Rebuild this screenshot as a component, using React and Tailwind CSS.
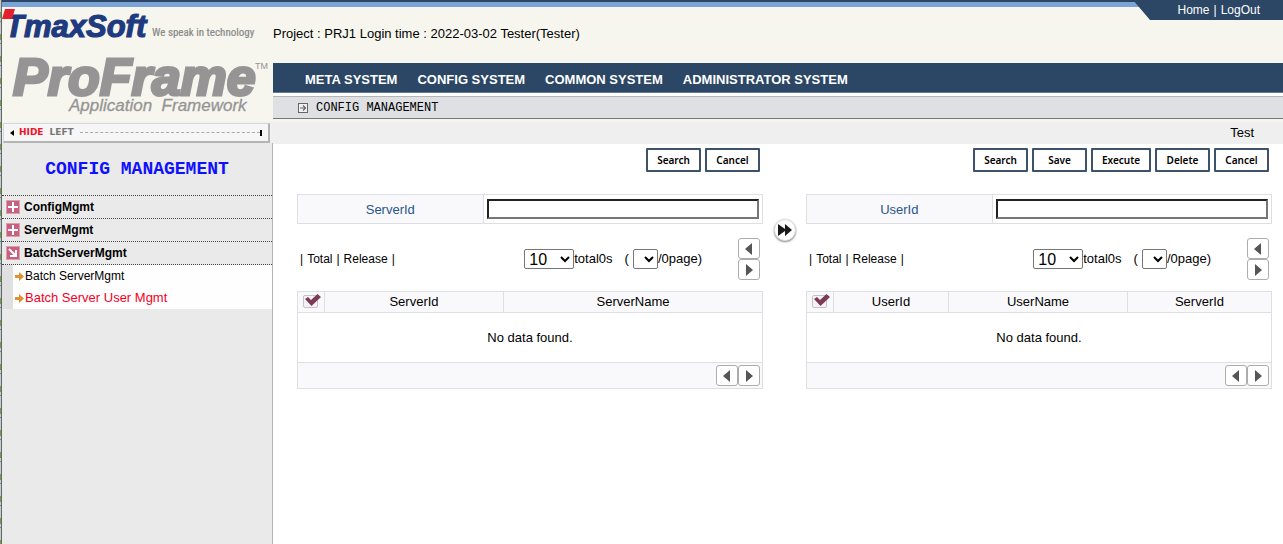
import React, { useState } from "react";

const NAV = ["META SYSTEM", "CONFIG SYSTEM", "COMMON SYSTEM", "ADMINISTRATOR SYSTEM"];

const MENU = [
  { label: "ConfigMgmt", open: false },
  { label: "ServerMgmt", open: false },
  { label: "BatchServerMgmt", open: true },
];

function Logo() {
  return (
    <svg
      width="270"
      height="115"
      viewBox="0 7 270 115"
      role="img"
      aria-label="TmaxSoft ProFrame"
      className="block"
    >
      <text x="3" y="37" fontSize="31" fontWeight="700" fontStyle="italic" fill="#203a80" stroke="#203a80" strokeWidth="1.2" fontFamily="'Liberation Sans', sans-serif">
        TmaxSoft
      </text>
      <path d="M3 9h10l-3 10h-10z" fill="#e5202e" />
      <text x="150" y="36" fontSize="11" fill="#8a8a8a" stroke="#8a8a8a" strokeWidth="0.2" fontFamily="'Liberation Sans Narrow', 'Roboto Condensed', sans-serif">
        We speak in technology
      </text>
      <text x="11" y="95" fontSize="52" fontWeight="700" fontStyle="italic" fill="#969495" stroke="#969495" strokeWidth="3" fontFamily="'Liberation Sans', sans-serif">
        ProFrame
      </text>
      <text x="253" y="69" fontSize="9" fill="#969495" fontFamily="'Liberation Sans', sans-serif">
        TM
      </text>
      <text x="67" y="111" fontSize="17" fontStyle="italic" fill="#969495" stroke="#969495" strokeWidth="0.3" fontFamily="'Liberation Sans', sans-serif">
        {"Application\u00a0 Framework"}
      </text>
    </svg>
  );
}

function MenuIcon({ open }) {
  return (
    <svg width="14" height="14" viewBox="0 0 14 14" className="shrink-0">
      <rect width="14" height="14" fill="#d9a0b0" />
      <rect x="1" y="1" width="12" height="12" fill="#c9607f" />
      {open ? (
        <path d="M3 3l7 7M10 4v6H4" stroke="#fff" strokeWidth="2" fill="none" />
      ) : (
        <path d="M7 2v10M2 7h10" stroke="#fff" strokeWidth="2" />
      )}
    </svg>
  );
}

function OrangeArrow() {
  return (
    <svg width="9" height="9" viewBox="0 0 9 9" className="shrink-0">
      <path d="M0 3h4V0l5 4.5L4 9V6H0z" fill="#e09032" />
    </svg>
  );
}

function ActionButton({ children, wide }) {
  return (
    <button
      className={`h-6 border-2 border-[#3c536b] rounded-[1px] bg-white font-['Noto_Sans'] text-[10px] font-semibold leading-none text-black ${
        wide ? "w-[60px]" : "w-[55px]"
      }`}
    >
      {children}
    </button>
  );
}

function ArrowButton({ dir }) {
  return (
    <button
      aria-label={dir === "left" ? "Previous" : "Next"}
      className="flex h-[21px] w-[22px] items-center justify-center rounded-[3px] border border-[#adadad] bg-white"
    >
      <svg width="8" height="12" viewBox="0 0 8 12">
        <path d={dir === "left" ? "M7 0v12L0 6z" : "M1 0v12L8 6z"} fill="#555" />
      </svg>
    </button>
  );
}

function CheckAll({ id }) {
  const [checked, setChecked] = useState(true);
  return (
    <label htmlFor={id} className="relative mx-auto block h-[14px] w-4">
      <input
        id={id}
        type="checkbox"
        aria-label="Select all"
        checked={checked}
        onChange={() => setChecked(!checked)}
        className="block h-[13px] w-[15px] appearance-none rounded-[2px] border border-[#c4c4c8] bg-[#f4f4f4]"
      />
      {checked && (
        <svg width="16" height="12" viewBox="0 0 16 12" className="pointer-events-none absolute -top-px left-0.5">
          <path d="M0 5l3-2 3 3L12.500 0 16 3 6.500 12z" fill="#7d3a58" />
        </svg>
      )}
    </label>
  );
}

function Panel({ id, field, actions, columns }) {
  return (
    <section className="min-w-0">
      <div className="flex h-[26px] justify-end gap-1 pr-[3px]">
        {actions.map((a) => (
          <ActionButton key={a} wide={a === "Execute"}>
            {a}
          </ActionButton>
        ))}
      </div>

      {/* Search field */}
      <div className="mt-5 flex h-[30px] border border-[#dedfe3]">
        <label
          htmlFor={`${id}-field`}
          className="flex w-2/5 items-center justify-center border-r border-[#dedfe3] bg-[#f9f9fb] pt-px text-[#27548d]"
        >
          {field}
        </label>
        <div className="flex flex-1 items-center px-[3px]">
          <input
            id={`${id}-field`}
            type="text"
            className="h-5 w-full border-2 border-t-[#222] border-l-[#222] border-r-[#767676] border-b-[#767676] bg-white px-1"
          />
        </div>
      </div>

      {/* Paging toolbar */}
      <div className="mt-[14px] flex h-[42px] items-center pl-[3px] pr-[3px]">
        <div className="flex flex-1 gap-1 text-xs">
          <span>|</span>
          <a href="#total">Total</a>
          <span>|</span>
          <a href="#release">Release</a>
          <span>|</span>
        </div>
        <div className="flex items-center">
          <select
            aria-label="Rows per page"
            className="h-5 w-[50px] rounded-[2px] border border-[#767676] bg-white text-base leading-none"
          >
            <option>10</option>
            <option>20</option>
          </select>
          <span>total0s</span>
          <span className="mr-1 ml-3">(</span>
          <select
            aria-label="Page"
            className="h-5 w-[25px] rounded-[2px] border border-[#767676] bg-white"
          />
          <span>/0page)</span>
        </div>
        <div className="ml-9">
          <ArrowButton dir="left" />
          <ArrowButton dir="right" />
        </div>
      </div>

      <table className="mt-[11px] w-full table-fixed border-collapse border border-[#dedfe3]">
        <thead>
          <tr className="h-[21px] bg-[#f9f9fb]">
            <th className="w-[27px] border border-[#dedfe3] p-0">
              <CheckAll id={`${id}-all`} />
            </th>
            {columns.map((c) => (
              <th key={c.label} className={`border border-[#dedfe3] p-0 pb-0.5 font-normal leading-none ${c.width}`}>
                {c.label}
              </th>
            ))}
          </tr>
        </thead>
        <tbody>
          <tr className="h-[50px]">
            <td colSpan={columns.length + 1} className="p-0 text-center">
              No data found.
            </td>
          </tr>
        </tbody>
        <tfoot>
          <tr className="h-[26px] border-t border-[#dedfe3] bg-[#f9f9fb]">
            <td colSpan={columns.length + 1} className="p-0">
              <div className="flex justify-end pr-[2px]">
                <ArrowButton dir="left" />
                <ArrowButton dir="right" />
              </div>
            </td>
          </tr>
        </tfoot>
      </table>
    </section>
  );
}

function Sidebar() {
  return (
    <aside className="flex w-[271px] shrink-0 flex-col">
      <div className="bg-[#f7f6ee]">
        <Logo />
      </div>
      <div className="bg-[#f0f0f0] pl-px pr-[3px] pt-px">
        <button className="flex h-5 w-full items-center border border-t-[#d8d8d8] border-l-[#d8d8d8] border-r-2 border-b-2 border-r-[#b4b4b4] border-b-[#b4b4b4] bg-[#f6f6f6] pr-[6px] pl-[6px] font-['DejaVu_Sans'] text-[9px] leading-none font-bold">
          <svg width="4" height="6" viewBox="0 0 4 6">
            <path d="M4 0v6L0 3z" fill="#000" />
          </svg>
          <span className="ml-[5px] text-[#f0142a]">HIDE</span>
          <span className="ml-[6px] text-[#777]">LEFT</span>
          <span className="ml-[6px] flex-1 border-t border-dashed border-[#aaa]" />
          <span className="h-[6px] w-[2px] bg-black" />
        </button>
      </div>
      <div className="flex-1 border-r border-[#b4b4b4] bg-[#eaeaea]">
        <h1 className="flex h-[52px] items-center justify-center font-['Liberation_Mono'] text-lg leading-none font-bold text-[#1010ff]">
          CONFIG MANAGEMENT
        </h1>
        <ul className="border-b border-dotted border-[#444]">
          {MENU.map((m) => (
            <li key={m.label} className="border-t border-dotted border-[#444]">
              <a href={`#${m.label}`} className="flex h-[22px] items-center gap-1 pl-1 text-xs font-bold">
                <MenuIcon open={m.open} />
                {m.label}
              </a>
            </li>
          ))}
        </ul>
        <ul className="border-l-[11px] border-[#e0e0e0] bg-[#fefefe]">
          <li>
            <a href="#batch-server" className="flex h-[22px] items-center gap-px pl-0.5 text-xs">
              <OrangeArrow />
              Batch ServerMgmt
            </a>
          </li>
          <li>
            <a href="#batch-server-user" className="flex h-[22px] items-center gap-px pl-0.5 text-[13px] text-[#f5001d]">
              <OrangeArrow />
              Batch Server User Mgmt
            </a>
          </li>
        </ul>
      </div>
    </aside>
  );
}

export default function App() {
  return (
    <div className="flex min-h-screen bg-white font-['Liberation_Sans',Arial,sans-serif] text-[13px] leading-4 text-black">
      <div className="w-0.5 shrink-0 border-r border-[#666] bg-[repeating-linear-gradient(#c3ccd0_0_12px,#6fa04a_12px_18px,#c3ccd0_18px_21px,#6a8f9c_21px_22px)]" />
      <div className="flex min-w-0 flex-1 flex-col">
        <header className="relative h-[7px] shrink-0 border-t-2 border-[#2c4665] bg-[#7ba3d6]">
          <div className="absolute -top-0.5 right-0 flex h-5 w-[150px] items-center justify-end gap-1 bg-[#2c4665] pr-[23px] text-xs text-white [clip-path:polygon(0_0,100%_0,100%_100%,17px_100%)]">
            <a href="#home">Home</a>
            <span>|</span>
            <a href="#logout">LogOut</a>
          </div>
        </header>

        <div className="flex flex-1">
          <Sidebar />

          <main className="flex min-w-0 flex-1 flex-col">
            <p className="h-14 bg-[#f7f6ee] pt-[19px]">
              Project : PRJ1 Login time : 2022-03-02 Tester(Tester)
            </p>
            <nav className="flex h-[30px] items-center gap-5 border-b border-[#64799a] bg-[#2c4665] pt-1 pl-8 font-bold text-white">
              {NAV.map((n) => (
                <a key={n} href={`#${n}`}>
                  {n}
                </a>
              ))}
            </nav>
            <div className="mt-[3px] flex h-[23px] items-center gap-2 border-t border-b border-t-[#b5b5b0] border-b-[#77777b] bg-[#dfe0e4] pl-[25px] font-['Liberation_Mono'] text-xs">
              <svg width="10" height="10" viewBox="0 0 10 10" fill="none" stroke="#666">
                <rect x="0.5" y="0.5" width="9" height="9" fill="#f2f2f2" />
                <path d="M2 5h5M5 2.500L7.500 5 5 7.500" strokeWidth="1.200" />
              </svg>
              CONFIG MANAGEMENT
            </div>
            <div className="border-t-[3px] border-[#f7f6ee] bg-[#efefef] pt-[3px] pr-[29px] pb-[3px] text-right">
              Test
            </div>

            <div className="grid grid-cols-[1fr_43px_1fr] pt-1 pr-[11px] pl-6">
              <Panel
                id="server"
                field="ServerId"
                actions={["Search", "Cancel"]}
                columns={[
                  { label: "ServerId", width: "w-[179px]" },
                  { label: "ServerName", width: "" },
                ]}
              />
              <button
                aria-label="Move right"
                className="mt-[71px] flex h-[22px] w-[22px] items-center justify-center justify-self-center rounded-full border border-[#ddd] bg-white shadow-[0_1px_2px_#888]"
              >
                <svg width="14" height="12" viewBox="0 0 14 12" fill="#1a1a1a" className="shrink-0">
                  <path d="M0 0L7 5V0l7 6-7 6V7L0 12z" />
                </svg>
              </button>
              <Panel
                id="user"
                field="UserId"
                actions={["Search", "Save", "Execute", "Delete", "Cancel"]}
                columns={[
                  { label: "UserId", width: "w-[115px]" },
                  { label: "UserName", width: "w-[179px]" },
                  { label: "ServerId", width: "" },
                ]}
              />
            </div>
          </main>
        </div>
      </div>
    </div>
  );
}
